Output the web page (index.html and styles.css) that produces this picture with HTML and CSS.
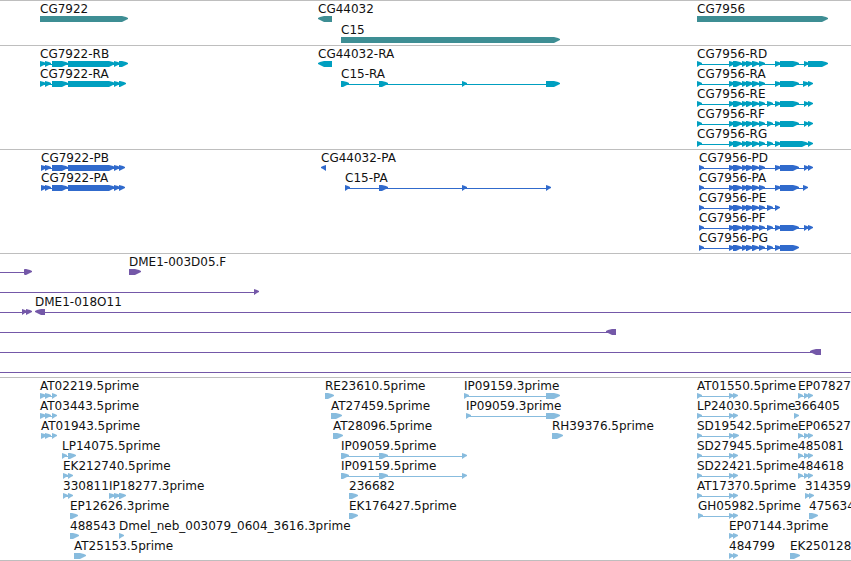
FILE: index.html
```html
<!DOCTYPE html>
<html lang="en">
<head>
<meta charset="utf-8">
<title>Genome tracks</title>
<link rel="stylesheet" href="styles.css">
</head>
<body>
<main id="tracks" class="tracks"></main>
<script src="tracks.js"></script>
</body>
</html>
```
FILE: styles.css
```css
body {
  margin: 0;
  background: #fff;
  color: #111;
  font-family: "DejaVu Sans", sans-serif;
  font-size: 12px;
}

.tracks {
  overflow: hidden;
  border-bottom: 1px solid #bebebe;
}

.track {
  border-top: 1px solid #bebebe;
  padding: 1px 0 2px;
}

.track.gene,
.track.est {
  padding-bottom: 1px;
}

.row {
  position: relative;
  height: 20px;
}

.gene .row {
  height: 21px;
}

.label {
  position: absolute;
  top: 0;
  line-height: 14px;
  white-space: nowrap;
}

.glyphs {
  display: block;
  width: 100%;
  height: 20px;
}

.gene .glyphs { fill: #3e8e94; }
.transcript .glyphs { fill: #009fc0; }
.protein .glyphs { fill: #306acc; }
.bac .glyphs { fill: #7458a8; }
.est .glyphs { fill: #88bcde; }
```
FILE: tracks.js
```js
// A feature is [label, labelX, exons, options]; an exon is [start, end].
// options: rev = points left, from/to = extent of the connecting line.
const EDGE = 4000;
const cg7922 = (s, e) => [[s, s + 6], [45, 51], [52, 68], [68, 115], [114, 120], [119, e]];
const head = s => [[s, s + 5], [729, 735], [733, 742], [742, 748], [746, 753], [752, 759], [759, 765]];
const mid = [767, 773];
const clone = (s, e) => [[s, s + 5], [729, 734], [733, e]];
const triple = [[798, 803], [804, 809], [808, 813]];
const at = s => [[s, s + 6], [45, 51], [52, 57]];
const c15 = [[341, 349], [379, 388], [462, 467]];

const tracks = [
  ["gene", [
    [["CG7922", 40, [[40, 128]]], ["CG44032", 318, [[318, 332]], { rev: 1 }], ["CG7956", 697, [[697, 828]]]],
    [["C15", 341, [[341, 560]]]]
  ]],
  ["transcript", [
    [["CG7922-RB", 40, cg7922(40, 128)], ["CG44032-RA", 318, [[318, 332]], { rev: 1 }],
      ["CG7956-RD", 697, [...head(697), [775, 781], [780, 799], [804, 809], [808, 828]]]],
    [["CG7922-RA", 40, cg7922(40, 126)], ["C15-RA", 341, [...c15, [546, 560]]],
      ["CG7956-RA", 697, [...head(697), [775, 781], [780, 799], [803, 809], [808, 813]]]],
    [["CG7956-RE", 697, [...head(697), mid, [775, 781], [780, 799], [804, 809], [808, 813]]]],
    [["CG7956-RF", 697, [...head(697), mid, [775, 781], [780, 799], [804, 809], [808, 813]]]],
    [["CG7956-RG", 697, [...head(697), mid, [775, 781], [780, 808], [808, 813]]]]
  ]],
  ["protein", [
    [["CG7922-PB", 41, cg7922(41, 125)], ["CG44032-PA", 321, [[321, 326]], { rev: 1 }],
      ["CG7956-PD", 699, [...head(699), [775, 781], [780, 799], [804, 809], [808, 813]]]],
    [["CG7922-PA", 41, cg7922(41, 125)], ["C15-PA", 345, [[345, 350], [379, 388], [462, 467], [546, 551]]],
      ["CG7956-PA", 699, [...head(699), [775, 781], [780, 799], [803, 808]]]],
    [["CG7956-PE", 699, [...head(699), mid, [775, 780]]]],
    [["CG7956-PF", 699, [...head(699), mid, [775, 781], [780, 799], [804, 809], [808, 813]]]],
    [["CG7956-PG", 699, [...head(699), mid, [775, 781], [780, 799]]]]
  ]],
  ["bac", [
    [["", 0, [[24, 29], [25, 32]], { from: 0 }], ["DME1-003D05.F", 129, [[129, 141]]]],
    [["", 0, [[254, 259]], { from: 0 }]],
    [["", 0, [[22, 27], [26, 32]], { from: 0 }], ["DME1-018O11", 35, [[35, 45]], { rev: 1, to: EDGE }]],
    [["", 0, [[606, 616]], { rev: 1, from: 0 }]],
    [["", 0, [[810, 821]], { rev: 1, from: 0 }]],
    [["", 0, [], { from: 0, to: EDGE }]]
  ]],
  ["est", [
    [["AT02219.5prime", 40, at(40)], ["RE23610.5prime", 325, [[325, 334]]],
      ["IP09159.3prime", 464, [[464, 469], [546, 560]]], ["AT01550.5prime", 697, clone(697, 738)], ["EP07827", 798, triple]],
    [["AT03443.5prime", 40, at(40)], ["AT27459.5prime", 331, [[331, 342]]],
      ["IP09059.3prime", 466, [[466, 471], [546, 560]]], ["LP24030.5prime", 697, clone(697, 738)], ["366405", 794, [[794, 799]]]],
    [["AT01943.5prime", 41, at(41)], ["AT28096.5prime", 333, [[333, 343]]],
      ["RH39376.5prime", 552, [[552, 563]]], ["SD19542.5prime", 697, clone(697, 739)], ["EP06527", 798, triple]],
    [["LP14075.5prime", 62, [[62, 67], [68, 76]]], ["IP09059.5prime", 341, c15],
      ["SD27945.5prime", 697, clone(697, 738)], ["485081", 798, triple]],
    [["EK212740.5prime", 63, [[63, 68], [68, 73]]], ["IP09159.5prime", 341, c15],
      ["SD22421.5prime", 697, clone(697, 738)], ["484618", 798, triple]],
    [["330811", 63, [[63, 68], [68, 73]]], ["IP18277.3prime", 109, [[109, 115], [114, 120], [119, 126]]],
      ["236682", 349, [[349, 358]]], ["AT17370.5prime", 697, clone(697, 738)], ["314359", 805, [[805, 810], [809, 814]]]],
    [["EP12626.3prime", 70, [[70, 78]]], ["EK176427.5prime", 349, [[349, 358]]],
      ["GH05982.5prime", 698, clone(698, 738)], ["475634", 809, [[809, 818]]]],
    [["488543", 70, [[70, 79]]], ["Dmel_neb_003079_0604_3616.3prime", 119, [[119, 124]]],
      ["EP07144.3prime", 729, [[729, 734], [733, 738]]]],
    [["AT25153.5prime", 74, [[74, 86]]], ["484799", 729, [[729, 734], [733, 738]]], ["EK250128", 790, [[790, 800]]]]
  ]]
];

// Body of an exon with a tapered end in the direction of the strand.
// Bars occupy y = 14..20 of a row; the connecting line is at y = 17.
function exonPath([a, b], rev, top) {
  const tip = Math.min(b - a, 6);
  const base = rev ? b : a;
  const end = rev ? a : b;
  const dir = rev ? 1 : -1;
  const shoulder = end + dir * tip;
  const mid = end + dir * 2;
  return `<path d="M${base} ${top}H${shoulder}L${mid} ${top + 1}L${end} ${top + 2}V${top + 3}` +
    `L${mid} ${top + 4}L${shoulder} ${top + 6}H${base}Z"/>`;
}

function featureShapes([, , exons, opt = {}]) {
  const top = 14;
  const bars = exons.map(e => exonPath(e, opt.rev, top)).join("");
  const last = exons.length - 1;
  if (last === 0 && opt.from === undefined && opt.to === undefined) return bars;
  const from = opt.from ?? exons[0][0] + 2;
  const to = opt.to ?? exons[last][1] - 2;
  return `<path d="M${from} ${top + 3}H${to}V${top + 4}H${from}Z"/>` + bars;
}

const root = document.getElementById("tracks");
for (const [kind, rows] of tracks) {
  const section = document.createElement("section");
  section.className = `track ${kind}`;
  for (const features of rows) {
    const row = document.createElement("div");
    row.className = "row";
    for (const f of features) {
      if (!f[0]) continue;
      const label = document.createElement("span");
      label.className = "label";
      label.style.left = `${f[1]}px`;
      label.textContent = f[0];
      row.append(label);
    }
    row.insertAdjacentHTML("beforeend",
      `<svg class="glyphs" aria-hidden="true">${features.map(featureShapes).join("")}</svg>`);
    section.append(row);
  }
  root.append(section);
}
```
